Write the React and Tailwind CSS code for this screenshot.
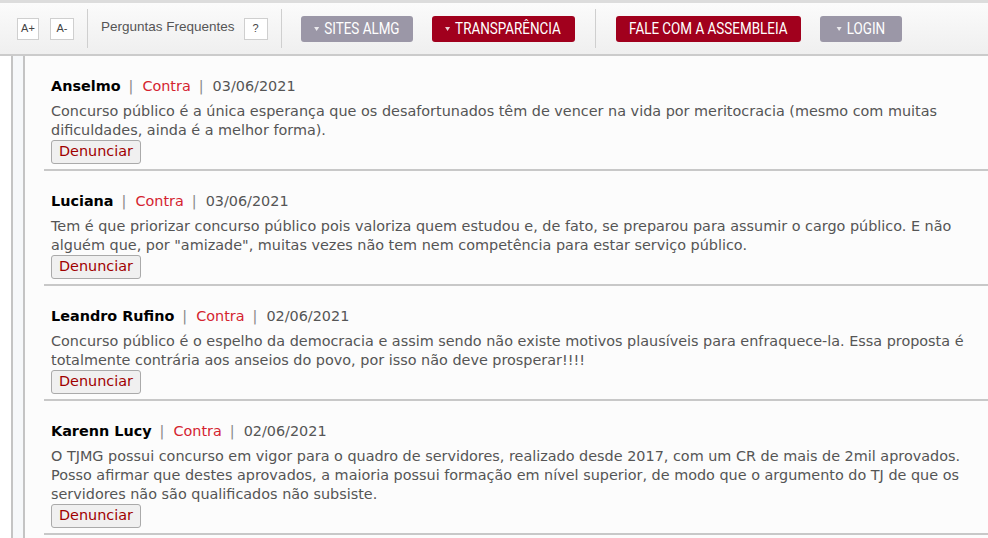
import React from 'react'

const comments = [
  {
    name: 'Anselmo',
    date: '03/06/2021',
    text: 'Concurso público é a única esperança que os desafortunados têm de vencer na vida por meritocracia (mesmo com muitas dificuldades, ainda é a melhor forma).',
  },
  {
    name: 'Luciana',
    date: '03/06/2021',
    text: 'Tem é que priorizar concurso público pois valoriza quem estudou e, de fato, se preparou para assumir o cargo público. E não alguém que, por "amizade", muitas vezes não tem nem competência para estar serviço público.',
  },
  {
    name: 'Leandro Rufino',
    date: '02/06/2021',
    text: 'Concurso público é o espelho da democracia e assim sendo não existe motivos plausíveis para enfraquece-la. Essa proposta é totalmente contrária aos anseios do povo, por isso não deve prosperar!!!!',
  },
  {
    name: 'Karenn Lucy',
    date: '02/06/2021',
    text: 'O TJMG possui concurso em vigor para o quadro de servidores, realizado desde 2017, com um CR de mais de 2mil aprovados. Posso afirmar que destes aprovados, a maioria possui formação em nível superior, de modo que o argumento do TJ de que os servidores não são qualificados não subsiste.',
  },
]

const btnFont = { fontFamily: '"Roboto", "Liberation Sans", sans-serif' }

// small triangle before dropdown labels
function Caret() {
  return <span className="mr-[6px] inline-block h-0 w-0 border-x-[3px] border-t-[4px] border-x-transparent border-t-white/80 align-middle" />
}

function Sep() {
  return <div className="h-[39px] w-px bg-[#cfcfcf]" />
}

function HeadBtn({ w, bg, caret, children }) {
  return (
    <div className={`flex h-[26px] items-center justify-center rounded-[3px] ${w} ${bg}`}>
      <span className="inline-flex scale-x-[0.84] items-center whitespace-nowrap text-[16px] text-white" style={btnFont}>
        {caret && <Caret />}
        {children}
      </span>
    </div>
  )
}

function Header() {
  return (
    <div className="h-[56px] border-t-[3px] border-b-2 border-t-[#dcdcdc] border-b-[#cbcbcb] bg-gradient-to-b from-[#fbfbfb] to-[#efefef]">
      <div className="flex h-full items-center pl-[17px]" style={{ fontFamily: 'Arial, "Liberation Sans", sans-serif' }}>
        <div className="flex h-[22px] w-[22px] items-center justify-center border border-[#cfcfcf] bg-white text-[11px] text-[#444]">A+</div>
        <div className="ml-[11px] flex h-[22px] w-[24px] items-center justify-center border border-[#cfcfcf] bg-white text-[11px] text-[#444]">A-</div>
        <div className="ml-[13px]"><Sep /></div>
        <div className="ml-[13px] -mt-[3px] text-[13.5px] text-[#555]">Perguntas Frequentes</div>
        <div className="ml-[9px] flex h-[22px] w-[24px] items-center justify-center border border-[#cfcfcf] bg-white text-[11px] text-[#444]">?</div>
        <div className="ml-[13px]"><Sep /></div>
        <div className="ml-[19px]">
          <HeadBtn w="w-[112px]" bg="bg-[#9b97a7]" caret>SITES ALMG</HeadBtn>
        </div>
        <div className="ml-[19px]">
          <HeadBtn w="w-[143px]" bg="bg-[#a1001d]" caret>TRANSPARÊNCIA</HeadBtn>
        </div>
        <div className="ml-[20px]"><Sep /></div>
        <div className="ml-[20px]">
          <HeadBtn w="w-[185px]" bg="bg-[#a1001d]">FALE COM A ASSEMBLEIA</HeadBtn>
        </div>
        <div className="ml-[19px]">
          <HeadBtn w="w-[82px]" bg="bg-[#9b97a7]" caret>LOGIN</HeadBtn>
        </div>
      </div>
    </div>
  )
}

function Comment({ c }) {
  return (
    <div className="border-b-2 border-[#c8c8c8] pb-[5px] pl-[7px] pr-[10px] pt-[21px]">
      <div className="leading-[19px]">
        <span className="font-bold text-black">{c.name}</span>
        <span className="ml-[8px] mr-[9px] text-[#888]">|</span>
        <span className="text-[#d4232f]">Contra</span>
        <span className="ml-[8px] mr-[9px] text-[#888]">|</span>
        <span className="text-[#555]">{c.date}</span>
      </div>
      <p className="mt-[6px] leading-[19px] text-[#555]">{c.text}</p>
      <button className="h-[24px] rounded-[3px] border border-[#aaa] bg-[#f0f0f0] px-[7px] text-[#a00000]">Denunciar</button>
    </div>
  )
}

export default function App() {
  return (
    <div className="h-[538px] w-[988px] overflow-hidden bg-white" style={{ fontFamily: '"DejaVu Sans", Tahoma, sans-serif' }}>
      <Header />
      <div className="flex h-full">
        <div className="w-[11px] shrink-0 bg-white" />
        <div className="w-[14px] shrink-0 border-x-2 border-[#c4c4c4] bg-[#f6f8fa]" />
        <div className="flex-1 bg-[#fcfcfc] pl-[19px] text-[14.4px]">
          {comments.map((c) => (
            <Comment key={c.name} c={c} />
          ))}
        </div>
      </div>
    </div>
  )
}
